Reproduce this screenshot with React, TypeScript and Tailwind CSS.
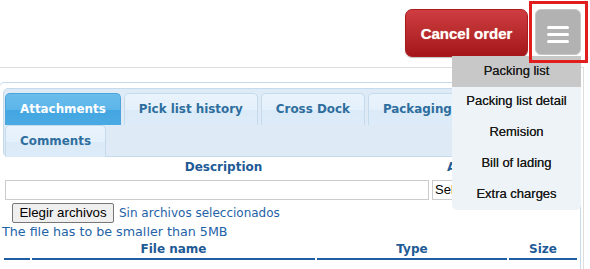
export default function App() {
  const tabs = [
    { label: 'Attachments', active: true, w: '' },
    { label: 'Pick list history', active: false, w: '' },
    { label: 'Cross Dock', active: false, w: '' },
    { label: 'Packaging', active: false, w: 'min-w-[150px]' },
    { label: 'Comments', active: false, w: '' },
  ];
  const menu = ['Packing list', 'Packing list detail', 'Remision', 'Bill of lading', 'Extra charges'];

  return (
    <div className="relative w-[590px] h-[269px] overflow-hidden bg-white" style={{ fontFamily: '"DejaVu Sans", sans-serif' }}>
      {/* top actions */}
      <div className="flex justify-end items-start gap-[7px] pt-[9px] pr-[9px] h-[67px]" style={{ fontFamily: '"Liberation Sans", Arial, sans-serif' }}>
        <button className="w-[123px] h-[48px] rounded-[7px] border border-[#a81c20] bg-gradient-to-b from-[#cf3d41] to-[#a31518] text-white font-bold text-[15px] pt-[2px] shadow-[0_1px_1px_rgba(0,0,0,0.25)] [text-shadow:0_0_1px_rgba(255,240,200,0.8)]">
          Cancel order
        </button>
        <button className="w-[46px] h-[46px] rounded-[6px] border border-[#c6c6c6] bg-[#b2b2b2] flex flex-col items-center gap-[4px] pt-[16px]">
          <span className="block w-[22px] h-[3px] rounded-full bg-white" />
          <span className="block w-[22px] h-[3px] rounded-full bg-white" />
          <span className="block w-[22px] h-[3px] rounded-full bg-white" />
        </button>
      </div>

      {/* page container */}
      <div className="w-[584px] h-[202px] border-t border-r border-[#dddddd] pt-[14px]">
        <div className="-ml-[1px] w-[582px] h-[200px] border border-[#c5dbec] rounded-[5px] pl-[3px] pr-[2px] pt-[5px]">
          {/* tabs nav */}
          <div className="flex flex-wrap gap-x-[3px] gap-y-[1px] border border-[#c5dbec] rounded-[5px] bg-[#deebf7] pl-[1px] pt-[4px]">
            {tabs.map((t) => (
              <div
                key={t.label}
                className={`${t.w} h-[32px] -mb-[1px] px-[14px] flex items-center rounded-t-[5px] border border-b-0 text-[11.9px] font-bold whitespace-nowrap ${
                  t.active
                    ? 'border-[#4da3dc] bg-[linear-gradient(#6abdec_0%,#5cb5e9_50%,#43a6e1_51%,#4aaae3_100%)] text-white'
                    : 'border-[#c5dbec] bg-[linear-gradient(#e9f3fc_0%,#e4f0fb_50%,#dbeaf8_51%,#deecf9_100%)] text-[#2e6e9e]'
                }`}
              >
                {t.label}
              </div>
            ))}
          </div>

          {/* panel */}
          <div className="pt-[2px]">
            <div className="flex h-[16px] items-center text-[12px] font-bold text-[#1d5a96]">
              <div className="w-[439px] ml-[1px] text-center">Description</div>
              <div className="ml-[4px] whitespace-nowrap">Attachment type</div>
            </div>
            <div className="flex mt-[5px] h-[20px]">
              <input className="ml-[2px] w-[424px] h-[20px] border border-[#cccccc] bg-white outline-none" />
              <div
                className="ml-[3px] w-[140px] h-[20px] border border-[#cccccc] bg-white text-[13px] text-black pl-[2px] leading-[18px]"
                style={{ fontFamily: '"Liberation Sans", Arial, sans-serif' }}
              >
                Select...
              </div>
            </div>
            <div className="flex items-center mt-[3px] h-[20px]">
              <button
                className="ml-[9px] w-[102px] h-[20px] border border-[#767676] rounded-[2px] bg-[#efefef] text-[13.3px] text-black leading-none"
                style={{ fontFamily: '"Liberation Sans", Arial, sans-serif' }}
              >
                Elegir archivos
              </button>
              <span className="ml-[5px] text-[12px] text-[#1e62a7]">Sin archivos seleccionados</span>
            </div>
            <p className="mt-[1px] h-[15px] leading-[15px] text-[12.7px] text-[#1e62a7] -ml-[1px]">The file has to be smaller than 5MB</p>
            <div className="flex gap-[2px] ml-[1px] mt-[2px] text-[12px] font-bold text-[#1d5a96]">
              <div className="w-[26px] h-[19px] border-b-2 border-[#1f5ea5]" />
              <div className="w-[283px] h-[19px] border-b-2 border-[#1f5ea5] text-center leading-[16px]">File name</div>
              <div className="w-[190px] h-[19px] border-b-2 border-[#1f5ea5] text-center leading-[16px]">Type</div>
              <div className="w-[68px] h-[19px] border-b-2 border-[#1f5ea5] text-center leading-[16px]">Size</div>
            </div>
          </div>
        </div>
      </div>

      {/* dropdown menu */}
      <div
        className="absolute left-[452px] top-[56px] w-[129px] rounded-b-[5px] bg-[#eef3f7]"
        style={{ fontFamily: '"Liberation Sans", Arial, sans-serif' }}
      >
        {menu.map((m, i) => (
          <div
            key={m}
            className={`h-[30.75px] pb-[2px] flex items-center justify-center text-[13px] text-[#1a1a1a] [text-shadow:0_0_0.5px_#333] ${i === 0 ? 'bg-[#c8c8c8]' : ''}`}
          >
            {m}
          </div>
        ))}
      </div>

      {/* highlight frame */}
      <div className="absolute left-[529px] top-[1px] w-[59px] h-[62px] border-[3px] border-[#e21d1d]" />
    </div>
  );
}
